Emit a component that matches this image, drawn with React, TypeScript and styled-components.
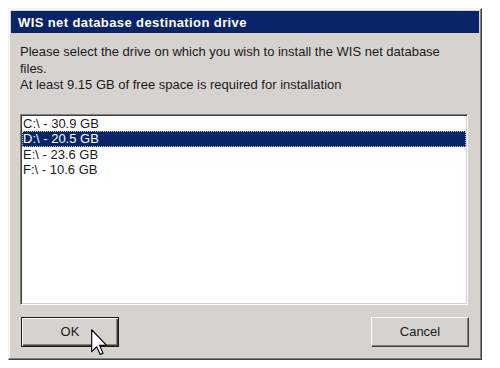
import { FC } from "react";
import styled, { createGlobalStyle } from "styled-components";

const GlobalStyle = createGlobalStyle`
    html, body {
        margin: 0;
        padding: 0;
        background: #ffffff;
    }
    body {
        font-family: "Liberation Sans", Arial, sans-serif;
    }
`;

const Page = styled.div`
    width: 500px;
    height: 368px;
    padding: 8px 0 0 8px;
    box-sizing: border-box;
`;

const Dialog = styled.div`
    position: relative;
    width: 474px;
    height: 352px;
    box-sizing: border-box;
    background: #d6d3ce;
    border: 1px solid;
    border-color: #f4f3f1 #404040 #404040 #f4f3f1;
    box-shadow: inset -1px -1px 0 #808080, inset 1px 1px 0 #ffffff;
    padding: 2px;
    display: flex;
    flex-direction: column;
`;

const TitleBar = styled.div`
    height: 22px;
    background: #0a246a;
    color: #ffffff;
    font-weight: bold;
    font-size: 13px;
    letter-spacing: 0.4px;
    display: flex;
    align-items: center;
    padding-left: 7px;
    padding-top: 1px;
    box-sizing: border-box;
`;

const Body = styled.div`
    flex: 1;
    display: flex;
    flex-direction: column;
    padding: 11px 10px 10px 9px;
`;

const Message = styled.div`
    font-size: 13px;
    line-height: 16.5px;
    color: #1a1a1a;
`;

const ListBox = styled.div`
    margin-top: 20px;
    height: 191px;
    box-sizing: border-box;
    background: #ffffff;
    border: 1px solid;
    border-color: #808080 #ffffff #ffffff #808080;
    box-shadow: inset 1px 1px 0 #404040, inset -1px -1px 0 #d6d3ce;
    padding: 1px;
    margin-right: 1px;
`;

const Row = styled.div<{ $selected?: boolean }>`
    height: 15.6px;
    line-height: 15.6px;
    font-size: 13px;
    padding-left: 1px;
    color: ${(p) => (p.$selected ? "#ffffff" : "#1a1a1a")};
    background: ${(p) => (p.$selected ? "#0a246a" : "transparent")};
    outline: ${(p) => (p.$selected ? "1px dotted #c8c8c8" : "none")};
    outline-offset: -1px;
`;

const ButtonRow = styled.div`
    margin-top: 12px;
    display: flex;
    justify-content: space-between;
    padding-left: 1px;
`;

const Button = styled.div<{ $default?: boolean }>`
    width: 98px;
    height: 30px;
    box-sizing: border-box;
    display: flex;
    align-items: center;
    justify-content: center;
    font-size: 13px;
    color: #1a1a1a;
    background: #d6d3ce;
    border: 1px solid;
    border-color: ${(p) => (p.$default ? "#1a1a1a" : "#ffffff #404040 #404040 #ffffff")};
    box-shadow: ${(p) =>
        p.$default
            ? "inset 1px 1px 0 #ffffff, inset -1px -1px 0 #404040, inset -2px -2px 0 #808080"
            : "inset -1px -1px 0 #808080"};
`;

const Cursor = styled.svg`
    position: absolute;
    left: 82px;
    top: 320px;
`;

const drives = [
    { label: "C:\\ - 30.9 GB" },
    { label: "D:\\ - 20.5 GB", selected: true },
    { label: "E:\\ - 23.6 GB" },
    { label: "F:\\ - 10.6 GB" },
];

const App: FC = () => {
    return (
        <Page>
            <GlobalStyle />
            <Dialog>
                <TitleBar>WIS net database destination drive</TitleBar>
                <Body>
                    <Message>
                        Please select the drive on which you wish to install the WIS net database
                        <br />
                        files.
                        <br />
                        At least 9.15 GB of free space is required for installation
                    </Message>
                    <ListBox>
                        {drives.map((d) => (
                            <Row key={d.label} $selected={d.selected}>
                                {d.label}
                            </Row>
                        ))}
                    </ListBox>
                    <ButtonRow>
                        <Button $default>OK</Button>
                        <Button>Cancel</Button>
                    </ButtonRow>
                </Body>
                <Cursor width="17" height="27" viewBox="0 0 12 19">
                    <path
                        d="M0.5 0.5 L0.5 16 L4 12.5 L6.5 18 L8.5 17 L6 11.5 L11 11.5 Z"
                        fill="#ffffff"
                        stroke="#000000"
                        strokeWidth="0.8"
                        strokeLinejoin="round"
                    />
                </Cursor>
            </Dialog>
        </Page>
    );
};

export default App;
